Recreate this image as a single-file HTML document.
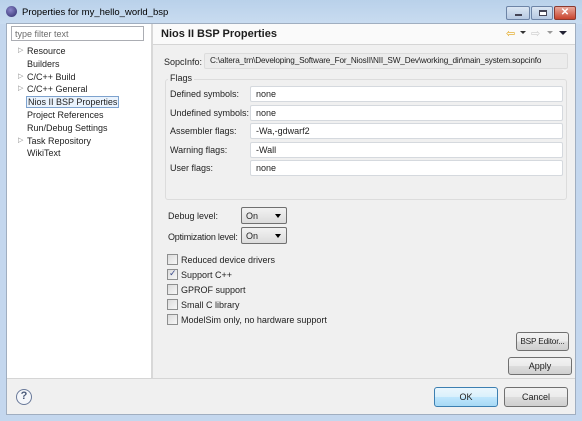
<!DOCTYPE html><html><head><style>
*{margin:0;padding:0;box-sizing:border-box}
body{width:582px;height:421px;overflow:hidden;font-family:"Liberation Sans",sans-serif;font-size:9px;color:#1e1e1e;background:#c4d7ee;position:relative}
.a{position:absolute}
.fld{position:absolute;background:#fff;border:1px solid #d5d9de;border-radius:2px;padding:2px 5px;height:16px;line-height:10px;white-space:nowrap;overflow:hidden}
.btn{position:absolute;border:1px solid #707070;border-radius:3px;background:linear-gradient(#f2f2f2,#ebebeb 50%,#dddddd 51%,#cfcfcf);text-align:center;font-size:9px;white-space:nowrap}
.cb{position:absolute;left:167px;width:11px;height:11px;border:1px solid #8e8f8f;background:linear-gradient(135deg,#dcdcdc,#f7f7f7)}
.cl{position:absolute;left:181px;font-size:9px}
.combo{position:absolute;left:241px;width:46px;height:17px;border:1px solid #707070;border-radius:2px;background:linear-gradient(#f2f2f2,#dcdcdc);padding:3px 4px;line-height:10px}
.combo:after{content:"";position:absolute;right:5px;top:6px;border:3px solid transparent;border-top:4px solid #000}
.lb{position:absolute;left:170px}
</style></head><body>
<div class="a" style="left:0;top:0;width:582px;height:24px;background:linear-gradient(#b9d1ea,#c9dcf0)"></div>
<div class="a" style="left:6px;top:6px;width:11px;height:11px;border-radius:50%;background:radial-gradient(circle at 40% 35%,#8a86c9,#2c2a6a)"></div>
<div class="a" style="left:22px;top:7px;font-size:9.5px;color:#000">Properties for my_hello_world_bsp</div>
<div class="a" style="left:506px;top:6px;width:24px;height:14px;border:1px solid #6d84a6;border-radius:2px;background:linear-gradient(#dbe6f3,#b6c9e2)"><div class="a" style="left:8px;top:7px;width:7px;height:2px;background:#fff;border:1px solid #445"></div></div>
<div class="a" style="left:531px;top:6px;width:22px;height:14px;border:1px solid #6d84a6;border-radius:2px;background:linear-gradient(#dbe6f3,#b6c9e2)"><div class="a" style="left:7px;top:3px;width:8px;height:6px;border:1px solid #445;border-top-width:2px;background:#fff"></div></div>
<div class="a" style="left:554px;top:6px;width:22px;height:14px;border:1px solid #8a3a30;border-radius:2px;background:linear-gradient(#e9a99c,#c8432d);color:#fff;font-weight:bold;text-align:center;line-height:12px;font-size:10px">✕</div>
<div class="a" style="left:6px;top:23px;width:570px;height:392px;background:#f0f0f0;border:1px solid #a0aec0"></div>
<div class="a" style="left:7px;top:24px;width:144px;height:354px;background:#fff"></div>
<div class="a" style="left:151px;top:24px;width:2px;height:354px;background:#d8d8d8"></div>
<div class="fld" style="left:11px;top:26px;width:133px;height:15px;border-color:#abadb3;border-radius:0;color:#6d6d6d;padding:2px 3px">type filter text</div>
<div class="a" style="left:18px;top:45px;line-height:12.8px;color:#888;font-size:7px">▷<br><br>▷<br>▷<br><br><br><br>▷</div>
<div class="a" style="left:27px;top:45px;line-height:12.8px">Resource<br>Builders<br>C/C++ Build<br>C/C++ General<br><span style="outline:1px solid #7da2ce;background:#eaf3fd;padding:0 1px">Nios II BSP Properties</span><br>Project References<br>Run/Debug Settings<br>Task Repository<br>WikiText</div>
<div class="a" style="left:153px;top:24px;width:422px;height:21px;background:#fafafa;border-bottom:1px solid #d5d5d5"></div>
<div class="a" style="left:161px;top:28px;font-size:11px;font-weight:bold">Nios II BSP Properties</div>
<div class="a" style="left:506px;top:27px;color:#e2a61a;font-size:11px">⇦</div><div class="a" style="left:520px;top:31px;border:3px solid transparent;border-top:3px solid #333"></div>
<div class="a" style="left:531px;top:27px;color:#ccc;font-size:11px">⇨</div><div class="a" style="left:547px;top:31px;border:3px solid transparent;border-top:3px solid #999"></div>
<div class="a" style="left:559px;top:31px;border:4px solid transparent;border-top:4px solid #223"></div>
<div class="a" style="left:164px;top:57px">SopcInfo:</div>
<div class="fld" style="left:204px;top:53px;width:364px;background:#ececec;border-color:#dcdcdc;font-size:8.2px;letter-spacing:-0.15px">C:\altera_trn\Developing_Software_For_NiosII\NII_SW_Dev\working_dir\main_system.sopcinfo</div>
<div class="a" style="left:165px;top:79px;width:402px;height:121px;border:1px solid #dcdcdc;border-radius:3px"></div>
<div class="a" style="left:168px;top:73px;background:#f0f0f0;padding:0 2px">Flags</div>
<div class="lb" style="top:89px">Defined symbols:</div>
<div class="lb" style="top:108px">Undefined symbols:</div>
<div class="lb" style="top:126px">Assembler flags:</div>
<div class="lb" style="top:145px">Warning flags:</div>
<div class="lb" style="top:163px">User flags:</div>
<div class="fld" style="left:250px;top:86px;width:313px">none</div>
<div class="fld" style="left:250px;top:105px;width:313px">none</div>
<div class="fld" style="left:250px;top:123px;width:313px">-Wa,-gdwarf2</div>
<div class="fld" style="left:250px;top:142px;width:313px">-Wall</div>
<div class="fld" style="left:250px;top:160px;width:313px">none</div>
<div class="a" style="left:168px;top:211px">Debug level:</div>
<div class="combo" style="top:207px">On</div>
<div class="a" style="left:168px;top:232px;letter-spacing:-0.2px">Optimization level:</div>
<div class="combo" style="top:227px">On</div>
<div class="cb" style="top:254px"></div><div class="cl" style="top:255px">Reduced device drivers</div>
<div class="cb" style="top:269px"><span class="a" style="left:1px;top:-2px;font-size:9px;color:#3a4a8a">✓</span></div><div class="cl" style="top:270px">Support C++</div>
<div class="cb" style="top:284px"></div><div class="cl" style="top:285px">GPROF support</div>
<div class="cb" style="top:299px"></div><div class="cl" style="top:300px">Small C library</div>
<div class="cb" style="top:314px"></div><div class="cl" style="top:315px">ModelSim only, no hardware support</div>
<div class="btn" style="left:516px;top:332px;width:53px;height:19px;line-height:17px;font-size:8.3px;letter-spacing:-0.2px">BSP Editor...</div>
<div class="btn" style="left:508px;top:357px;width:64px;height:18px;line-height:16px">Apply</div>
<div class="a" style="left:7px;top:378px;width:568px;height:1px;background:#d5d5d5"></div>
<div class="a" style="left:16px;top:389px;width:16px;height:16px;border-radius:50%;border:1.5px solid #6a7a9a;background:#f4f6fa;color:#4a5a7a;font-weight:bold;font-size:11px;text-align:center;line-height:13px">?</div>
<div class="btn" style="left:434px;top:387px;width:64px;height:20px;line-height:18px;border-color:#3c7fb1;background:linear-gradient(#eaf6fd,#d9f0fc 50%,#bee6fd 51%,#a7d9f5)">OK</div>
<div class="btn" style="left:504px;top:387px;width:64px;height:20px;line-height:18px">Cancel</div>
</body></html>
